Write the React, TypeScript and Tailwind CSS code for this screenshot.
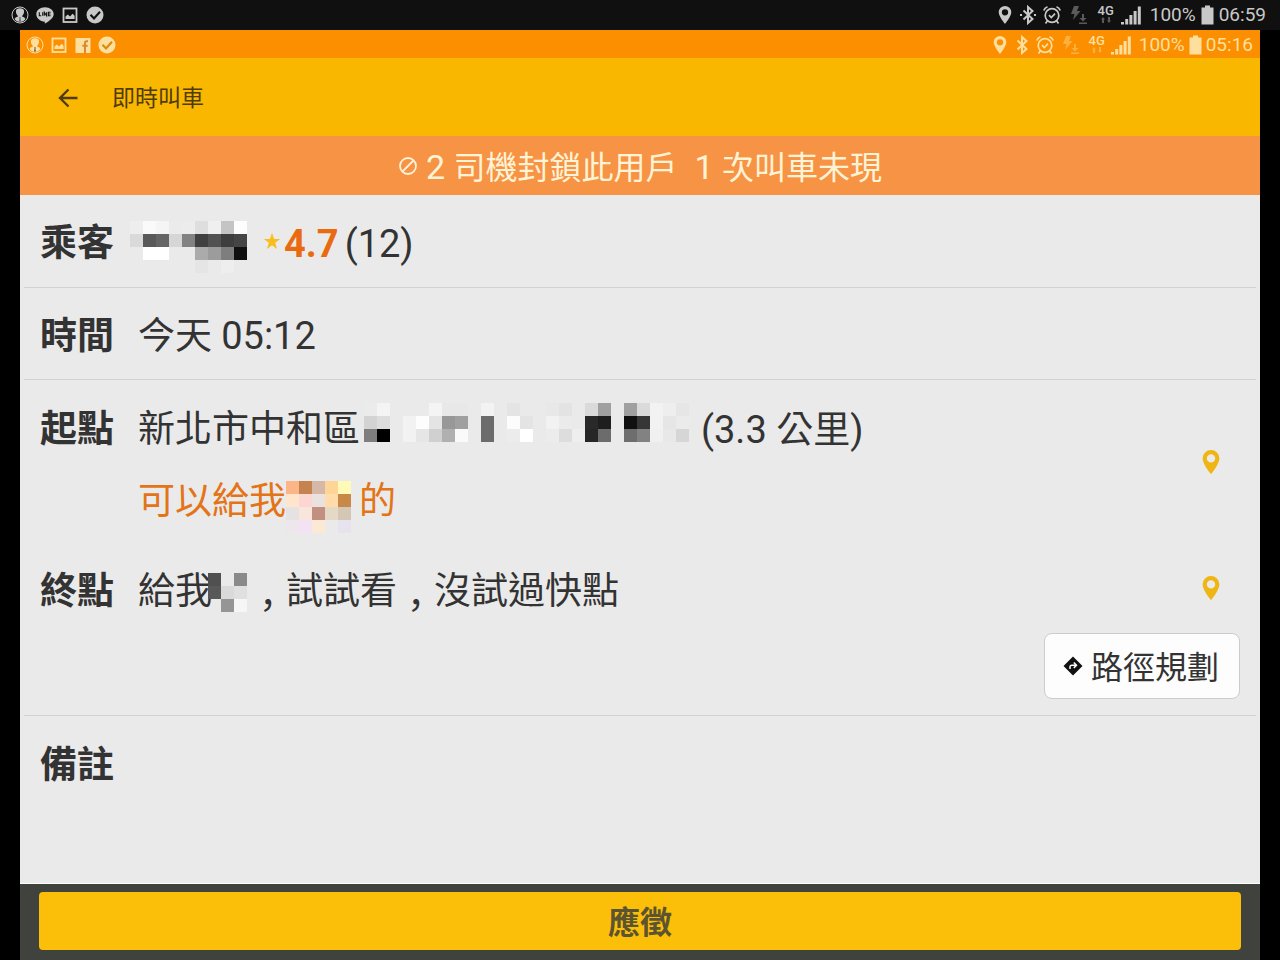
import type { ReactNode } from "react";

const FONT = "font-[Roboto,'Noto_Sans_CJK_TC',sans-serif]";

type Cell = string | null;

const parse = (row: string): Cell[] => row.split(" ").map((c) => (c === "-" ? null : c.length === 2 ? `#${c}${c}${c}` : `#${c}`));

const nameMask = [
  "ee fa f5 eb ec de ef c4 fd",
  "da 59 65 d6 82 40 52 3e 45",
  "- ff ff - - ab 9c 7e 10",
  "- - - - - e5 ea ee -",
].map(parse);

const addressMask = [
  "eb f4 - - - f4 e8 e8 - f3 - e4 - - e8 e3 - da a0 - a0 da f2 ee e6",
  "d3 dd - f2 fd e4 98 a0 - 6c - fc e4 - f2 eb - 29 1e - 10 36 f2 e6 eb",
  "7e 00 - f2 e6 d0 b0 fa - 6c - ec ff - ec dd ee 26 6c - 6e 82 f0 e8 d6",
].map(parse);

const noteMask = [
  "fcb587 c5834f d6b8a8 ffd597 fffab8",
  "fee5cb fcd6d2 eae1e1 ffdcaa c88847",
  "e5e3e2 f8e5dc c29080 e5d9c5 d5c7b5",
  "ede6ea f2e2f4 fbe9d3 - e6e3ee",
].map(parse);

const destinationMask = ["50 ea 8a", "58 da e0", "- 95 f6"].map(parse);

function Mosaic({ cells, className = "" }: { cells: Cell[][]; className?: string }) {
  const w = cells[0].length * 13;
  const h = cells.length * 13;
  return (
    <svg width={w} height={h} viewBox={`0 0 ${w} ${h}`} shapeRendering="crispEdges" aria-hidden="true" className={`shrink-0 ${className}`}>
      {cells.flatMap((row, y) =>
        row.map((c, x) => (c ? <rect key={`${x}-${y}`} x={x * 13} y={y * 13} width="13" height="13" fill={c} /> : null)),
      )}
    </svg>
  );
}

function PersonIcon() {
  return (
    <svg viewBox="0 0 20 20" className="h-5 w-5">
      <circle cx="10" cy="10" r="8" fill="none" stroke="currentColor" strokeWidth="1" />
      <path d="M6 5.500C6.400 4 8 3.300 10 3.300s3.600.7 4 2.200c.3 2.300-.4 4-1.600 4.900l-.2 1.300c1.800.4 2.800 1 3.200 2.200-1.200 1.900-3.200 3-5.400 3s-4.200-1.100-5.400-3c.4-1.200 1.400-1.800 3.200-2.200l-.2-1.300C6.400 9.500 5.700 7.800 6 5.500z" fill="currentColor" />
      <path d="M9 12.300h2l-.4 1.500.6 3H8.800l.6-3z" fill="#333" fillOpacity="0.6" />
    </svg>
  );
}

function LineIcon() {
  return (
    <svg viewBox="0 0 20 20" className="h-5 w-5">
      <path d="M10 2.300c4.900 0 8.700 3 8.700 6.800 0 2.700-2 4.800-4.500 6.700-1.600 1.200-3.300 2.400-4 2.600-.7.200-.4-.8-.3-1.600C5 16.500 1.300 13.200 1.300 9.100 1.300 5.300 5.100 2.300 10 2.300z" fill="currentColor" />
      <path d="M4.300 7.200v3.600h1.900M7.700 7.200v3.600M9.300 10.800V7.300l2.300 3.400V7.200M15.600 7.300h-2.200v3.500h2.200M13.400 9h2" fill="none" stroke="#111" strokeWidth="1.100" />
    </svg>
  );
}

function PictureIcon() {
  return (
    <svg viewBox="0 0 20 20" className="h-5 w-5">
      <rect x="3.500" y="3.500" width="13" height="13.500" fill="none" stroke="currentColor" strokeWidth="1.800" />
      <path d="M5.500 14v-2.500l2.300-2 2.200 2 2.600-2.800 2 2V14z" fill="currentColor" />
    </svg>
  );
}

function FacebookIcon() {
  return (
    <svg viewBox="0 0 20 20" className="h-5 w-5">
      <path d="M2.500 3h15v15h-15z" fill="currentColor" />
      <path d="M15 6.200h-1.500c-1 0-1.500.5-1.500 1.600V18M9.300 10.800h5.400" fill="none" stroke="#d98a30" strokeWidth="2" />
    </svg>
  );
}

function CheckIcon({ mark }: { mark: string }) {
  return (
    <svg viewBox="0 0 20 20" className="h-5 w-5">
      <circle cx="10" cy="10" r="8.500" fill="currentColor" />
      <path d="M5.500 9.800l3.500 3.600 6-6.600" fill="none" stroke={mark} strokeWidth="2.200" />
    </svg>
  );
}

function PinIcon({ className }: { className: string }) {
  return (
    <svg viewBox="0 0 18 24" className={className}>
      <path fillRule="evenodd" fill="currentColor" d="M9 0a8.400 8.400 0 0 1 8.400 8.400C17.400 14 9 24 9 24S.6 14 .6 8.400A8.400 8.400 0 0 1 9 0zm0 4.200a4.200 4.200 0 1 0 0 8.400 4.200 4.200 0 0 0 0-8.400z" />
    </svg>
  );
}

function BluetoothIcon({ dots }: { dots: boolean }) {
  return (
    <svg viewBox="0 0 18 20" className="h-5 w-[18px]">
      <path d="M4.500 5.500l9 8.500-4.500 4V2l4.500 4-9 8.500" fill="none" stroke="currentColor" strokeWidth="2" />
      {dots && <path d="M1 9h2v2H1zM15 9h2v2h-2z" fill="currentColor" />}
    </svg>
  );
}

function AlarmIcon() {
  return (
    <svg viewBox="0 0 20 20" className="h-5 w-5" fill="none" stroke="currentColor" strokeWidth="1.700">
      <circle cx="10" cy="10.500" r="6.800" />
      <path d="M1.800 5.500C2.300 3.600 3.600 2.300 5.500 1.700M18.200 5.500c-.5-1.900-1.800-3.200-3.700-3.800M5.500 15.800l-2 2.700M14.500 15.800l2 2.700M7 10.200l2.300 2.300L13 8.700" />
    </svg>
  );
}

function FlashIcon() {
  return (
    <svg viewBox="0 0 24 20" className="h-5 w-6 opacity-40" fill="currentColor">
      <path d="M7 1h5l-2 5h3.500L6 15l1.500-6H4zM15 9h2v4h2.500L16 16.500 12.500 13H15zM12 17.500h8V19h-8z" />
    </svg>
  );
}

function NetworkIcon() {
  return (
    <span className="flex h-5 w-5 flex-col items-center">
      <span className="text-[13px] font-medium leading-3">4G</span>
      <svg viewBox="0 0 12 6" className="h-[6px] w-3 opacity-40" fill="currentColor">
        <path d="M1 2.500L3 0l2 2.500H4V6H2V2.500zM8 0h2v3.500h1L9 6 7 3.500h1z" />
      </svg>
    </span>
  );
}

function SignalIcon() {
  return (
    <svg viewBox="0 0 20 20" className="h-5 w-5" fill="currentColor">
      <path d="M0 17h3v2.500H0zM4.200 14h3v5.500h-3zM8.400 10h3v9.500h-3zM12.600 6h3v13.500h-3zM16.800 1.500h3v18h-3z" />
    </svg>
  );
}

function BatteryIcon() {
  return (
    <svg viewBox="0 0 13 20" className="h-5 w-[13px]" fill="currentColor">
      <path d="M4 .5h5v2h3.500v17H.5v-17H4z" />
    </svg>
  );
}

function StatusBar({ left, time, dots, className }: { left: ReactNode; time: string; dots: boolean; className: string }) {
  return (
    <div className={`flex items-center justify-between ${className}`}>
      <div className="flex items-center gap-[inherit]">{left}</div>
      <div className="flex items-center gap-[inherit]">
        <span className="flex w-[18px] justify-center">
          <PinIcon className="h-[18px] w-[14px]" />
        </span>
        <BluetoothIcon dots={dots} />
        <AlarmIcon />
        <FlashIcon />
        <NetworkIcon />
        <SignalIcon />
        <span className="ml-1">100%</span>
        <BatteryIcon />
        <span>{time}</span>
      </div>
    </div>
  );
}

function Label({ children }: { children: ReactNode }) {
  return <h2 className="w-[98px] shrink-0 text-[37px] font-bold leading-[72px]">{children}</h2>;
}

function Num({ children }: { children: ReactNode }) {
  return <span className="text-[38px]">{children}</span>;
}

function Comma() {
  return <span className="w-[37px] pl-[10px] font-['Noto_Sans_CJK_SC',sans-serif] [font-feature-settings:'halt']">，</span>;
}

function MapLink({ label }: { label: string }) {
  return (
    <button type="button" aria-label={label} className="mb-2 ml-auto mr-[20px] flex shrink-0 text-[#efb512]">
      <PinIcon className="h-6 w-[18px]" />
    </button>
  );
}

export default function App() {
  return (
    <div className={`flex min-h-screen flex-col bg-black text-[#333] ${FONT}`}>
      <StatusBar
        time="06:59"
        dots
        className="h-[30px] gap-[5px] bg-[#101010] pl-[10px] pr-[14px] text-[19px] text-[#c8c8c8]"
        left={
          <>
            <PersonIcon />
            <LineIcon />
            <PictureIcon />
            <CheckIcon mark="#111" />
          </>
        }
      />
      <div className="mx-5 flex flex-1 flex-col bg-[#eaeaea]">
        <StatusBar
          time="05:16"
          dots={false}
          className="h-7 gap-1 bg-[#fc8f00] pl-[5px] pr-[7px] pt-[2px] text-[19px] text-[#ffdf9e]"
          left={
            <>
              <PersonIcon />
              <PictureIcon />
              <FacebookIcon />
              <CheckIcon mark="#d98a10" />
            </>
          }
        />
        <header className="flex h-[78px] items-center bg-[#fab700] pl-[38px] pt-px text-[#4f3c08]">
          <button type="button" aria-label="返回" className="mr-[34px]">
            <svg viewBox="0 0 20 20" className="h-5 w-5" fill="none" stroke="currentColor" strokeWidth="2.400">
              <path d="M19.500 10H2M10.500 1.500L2 10l8.500 8.500" />
            </svg>
          </button>
          <h1 className="pt-1 text-[23px]">即時叫車</h1>
        </header>
        <p className="flex h-[59px] items-center justify-center bg-[#f79345] pt-px text-[32px] text-[#fff3d6]">
          <svg viewBox="0 0 20 20" className="mr-2 h-5 w-5" fill="none" stroke="currentColor" strokeWidth="1.800">
            <circle cx="10" cy="10" r="8" />
            <path d="M4.500 15.500l11-11" />
          </svg>
          <span className="whitespace-pre pt-[2px]">
            <span className="text-[34px]">2 </span>司機封鎖此用戶<span className="text-[34px]">{"  "}1 </span>次叫車未現
          </span>
        </p>
        <main className="flex-1 px-1 text-[37px] leading-[72px]">
          <section className="flex h-[93px] items-center border-b border-[#d2d2d2] px-4 pt-[6px]">
            <Label>乘客</Label>
            <Mosaic cells={nameMask} className="-ml-2 mt-[6px]" />
            <svg viewBox="0 0 24 24" className="mb-[6px] ml-4 h-[18px] w-[18px]" fill="#f9bd1c">
              <path d="M12 1l2.700 8.200H23l-6.800 5 2.600 8.300L12 17.500l-6.800 5 2.600-8.300L1 9.200h8.300z" />
            </svg>
            <span className="ml-[3px] text-[38px] font-bold text-[#ea6a10]">4.7</span>
            <span className="ml-[6px] text-[38px]">(12)</span>
          </section>
          <section className="flex h-[92px] items-center border-b border-[#d2d2d2] px-4 pt-[6px]">
            <Label>時間</Label>
            <p>
              今天 <Num>05:12</Num>
            </p>
          </section>
          <section className="border-b border-[#d2d2d2] px-4 pb-4 pt-[14px]">
            <div className="flex items-center">
              <div className="flex items-start">
                <Label>起點</Label>
                <div>
                  <p className="flex h-[72px] items-center">
                    新北市中和區
                    <Mosaic cells={addressMask} className="mb-4 ml-1" />
                    <span className="ml-3 whitespace-pre">
                      <Num>(3.3 </Num>公里<Num>)</Num>
                    </span>
                  </p>
                  <p className="flex h-[72px] items-center text-[#e37417]">
                    可以給我
                    <Mosaic cells={noteMask} className="mt-[10px]" />
                    <span className="ml-2">的</span>
                  </p>
                </div>
              </div>
              <MapLink label="起點地圖" />
            </div>
            <div className="mt-[18px] flex items-center">
              <Label>終點</Label>
              <p className="flex h-[72px] items-center">
                給我
                <Mosaic cells={destinationMask} className="-ml-1 mr-[2px]" />
                <Comma />
                <span>試試看</span>
                <Comma />
                <span>沒試過快點</span>
              </p>
              <MapLink label="終點地圖" />
            </div>
            <div className="mt-[5px] flex justify-end">
              <button type="button" className="flex h-[66px] items-center gap-2 rounded-lg border border-[#ccc] bg-[#fdfdfd] pl-[18px] pr-5 text-[32px]">
                <svg viewBox="0 0 20 20" className="h-5 w-5">
                  <path d="M10 .5l9.500 9.500-9.500 9.500L.5 10z" fill="#111" />
                  <path d="M7 13v-2c0-1.200.6-1.800 1.800-1.800h3.700M10.800 6.500l2.700 2.700-2.700 2.700" fill="none" stroke="#fff" strokeWidth="1.500" />
                </svg>
                <span className="pt-1">路徑規劃</span>
              </button>
            </div>
          </section>
          <section className="flex px-4 pt-[14px]">
            <Label>備註</Label>
          </section>
        </main>
        <footer className="flex border-t border-white bg-[#40423e] px-[19px] pb-[10px] pt-2">
          <button type="button" className="h-[58px] flex-1 rounded-sm bg-[#fbbf09] pt-1 text-[32px] font-bold text-[#5c5430]">
            應徵
          </button>
        </footer>
      </div>
    </div>
  );
}
